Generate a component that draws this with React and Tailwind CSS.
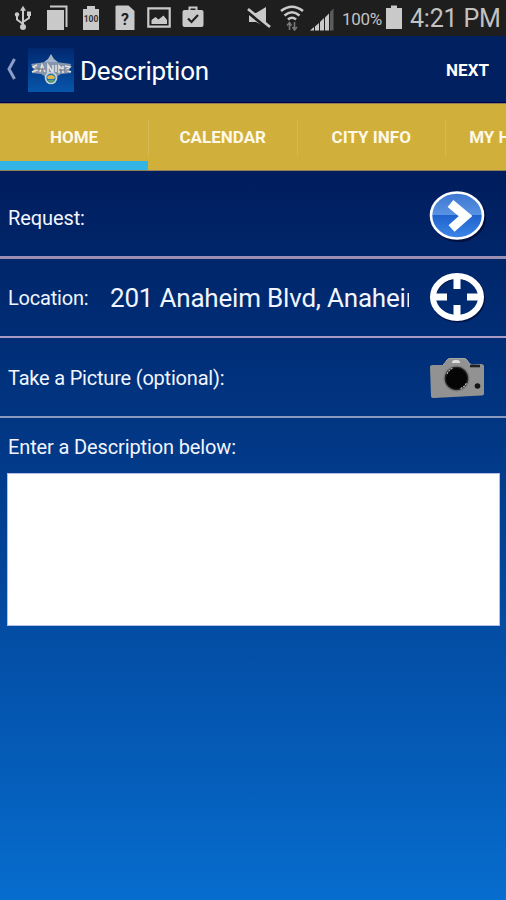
const UsbIcon = () => (
  <svg width="18" height="26" viewBox="0 0 18 26" className="ml-[14px]" fill="#c9c9c9" stroke="#c9c9c9">
    <path d="M9 5v17M3 10v4.500l6 4.500M15 9v4l-6 4" fill="none" strokeWidth="2" />
    <path d="M9 .8l3 5H6z" stroke="none" />
    <circle cx="9" cy="22" r="3" stroke="none" />
    <circle cx="3" cy="9.500" r="2.200" stroke="none" />
    <path d="M13 6.500h4v4.500h-4z" stroke="none" />
  </svg>
);

const PagesIcon = () => (
  <svg width="22" height="26" viewBox="0 0 22 26" className="ml-[14px]" fill="#c9c9c9">
    <path d="M1 5h17v20H1z" />
    <path d="M4 1.500h16.500V22" fill="none" stroke="#c9c9c9" strokeWidth="2" />
  </svg>
);

const BatteryLevelIcon = () => (
  <svg width="18" height="26" viewBox="0 0 18 26" className="ml-[14px]" fill="#c9c9c9">
    <path d="M5 1h8v3h4v21H1V4h4z" />
    <text x="9" y="17" textAnchor="middle" fontSize="8.500" fontWeight="700" fill="#333" fontFamily="Roboto, sans-serif">100</text>
  </svg>
);

const UnknownSimIcon = () => (
  <svg width="20" height="26" viewBox="0 0 20 26" className="ml-[15px]" fill="#c9c9c9">
    <path d="M1.500 0.500h12L19.500 6v19h-19V1.500z" />
    <text x="10" y="19.500" textAnchor="middle" fontSize="16" fontWeight="700" fill="#222" fontFamily="Roboto, sans-serif">?</text>
  </svg>
);

const ImageIcon = () => (
  <svg width="24" height="26" viewBox="0 0 24 26" className="ml-[12px]">
    <path d="M1.300 3.300h21.400v18.400H1.300z" fill="none" stroke="#c9c9c9" strokeWidth="2.200" />
    <path d="M4.500 19v-4l4-3 3 2.500 5-4 3.500 4.500v4z" fill="#c9c9c9" />
  </svg>
);

const TaskIcon = () => (
  <svg width="22" height="26" viewBox="0 0 22 26" className="ml-[11px]">
    <rect x="0.500" y="5" width="21" height="17" rx="2" fill="#c9c9c9" />
    <path d="M7.500 6V2.500h7V6" fill="none" stroke="#c9c9c9" strokeWidth="2" />
    <path d="M6 13.500l3.500 3.500 6.500-7" fill="none" stroke="#222" strokeWidth="2.200" />
  </svg>
);

const MuteIcon = () => (
  <svg width="24" height="26" viewBox="0 0 24 26">
    <path d="M2 8h7L19 2v20L9 17H2z" fill="#c9c9c9" />
    <path d="M0 5.500L22 23.500" stroke="#1e1e1e" strokeWidth="4.500" />
    <path d="M1 4L23 22" stroke="#c9c9c9" strokeWidth="2.800" />
  </svg>
);

const WifiIcon = () => (
  <svg width="24" height="26" viewBox="0 0 24 26" className="ml-[9px]" fill="none">
    <path d="M1 6Q12-2.500 23 6M4.500 10.500Q12 4 19.500 10.500M8 14.500Q12 11 16 14.500" stroke="#c9c9c9" strokeWidth="2.600" />
    <path d="M9.500 25v-7M14.500 17v7M7 20.500l2.500-3 2 3M12.500 22l2 3 2.500-3" stroke="#777" strokeWidth="1.600" />
  </svg>
);

const SignalIcon = () => (
  <svg width="24" height="26" viewBox="0 0 24 26" className="ml-[6px]" fill="#c9c9c9">
    <path d="M0 25.500l4-3.500v3.500zM5 21.500L9 18v7.500H5zM10 17L14 13v12.500h-4zM15 12.500L19 8.500v17h-4z" />
    <path d="M20 7l3.500-3.500v22H20z" fill="#5c5c5c" />
  </svg>
);

const BatteryIcon = () => (
  <svg width="16" height="26" viewBox="0 0 16 26" className="ml-[4px]" fill="#c9c9c9">
    <path d="M5 .5h6V3h5v21H0V3h5z" />
  </svg>
);

const StatusBar = () => (
  <div className="flex h-9 shrink-0 items-center bg-[#1e1e1e] text-[#c2c2c2]">
    <UsbIcon />
    <PagesIcon />
    <BatteryLevelIcon />
    <UnknownSimIcon />
    <ImageIcon />
    <TaskIcon />
    <div className="ml-auto flex items-center pr-[5px]">
      <MuteIcon />
      <WifiIcon />
      <SignalIcon />
      <span className="ml-[8px] mt-[2px] w-[40px] whitespace-nowrap text-[17px] leading-none tracking-[-0.3px]">100%</span>
      <BatteryIcon />
      <span className="ml-2 w-[91px] whitespace-nowrap text-[25px] leading-none tracking-[-0.2px]">4:21 PM</span>
    </div>
  </div>
);

const AppLogo = () => (
  <svg width="46" height="44" viewBox="0 0 46 44" className="ml-[11px] mt-[2px]">
    <defs>
      <linearGradient id="logoBg" x1="0" y1="0" x2="0" y2="1">
        <stop offset="0" stopColor="#01286f" />
        <stop offset="1" stopColor="#0756ac" />
      </linearGradient>
    </defs>
    <path d="M0 0h46v44H0z" fill="url(#logoBg)" />
    <path d="M23 6l3 5 4 3-1 3H17l-1-3 4-3z" fill="#a5b3c8" />
    <path d="M3 16l15-2h10l15 2-2 6 2 3-10 1-5 3H18l-5-3-9-1 2-4z" fill="#8495ae" />
    <path d="M9 17l-4 2 4 3-5 2M12 24l2-7 3 7M20 25v-8l5 8v-8M28 17v7M31 25v-7l4 4M35 25v-7M37 18l5 1-4 3 5 2" fill="none" stroke="#e5e1dc" strokeWidth="1.600" />
    <path d="M5 21h12M31 22h11" stroke="#6d6a74" strokeWidth="1" />
    <circle cx="23" cy="30" r="6.300" fill="#c4d0d9" />
    <circle cx="23" cy="30" r="4.600" fill="#2378a8" />
    <path d="M19 29q4-4 8 0l-1 2h-6z" fill="#e7b44a" />
    <path d="M19.500 32h7l-2 2.500h-3z" fill="#5a9c68" />
  </svg>
);

const Header = () => (
  <header className="flex h-[67px] shrink-0 items-center border-b border-[#00004d] bg-[#00205f] text-white">
    <svg width="11" height="22" viewBox="0 0 11 22" className="ml-[6px]">
      <path d="M8.500 1L3 11l5.500 10" fill="none" stroke="#8c9cc6" strokeWidth="3" />
    </svg>
    <AppLogo />
    <h1 className="ml-[6px] mt-[3px] text-[26px] leading-none tracking-[-0.25px]">Description</h1>
    <button className="ml-auto mr-[17px] mt-[2px] text-[17px] font-bold leading-none">NEXT</button>
  </header>
);

const tabs = ["HOME", "CALENDAR", "CITY INFO", "MY HOME"];

const Tabs = () => (
  <nav className="flex h-[68px] shrink-0 overflow-hidden border-y border-[#8f8058] bg-[#d0af3a]">
    {tabs.map((tab, i) => (
      <div
        key={tab}
        className={`flex shrink-0 flex-col ${i === 3 ? "w-[125px]" : i === 0 ? "w-[148px]" : "w-[148.500px]"}`}
      >
        <div className="flex flex-1 items-center">
          {i > 0 && <span className="mt-px h-9 w-px bg-[#d6b954]" />}
          <span className={`flex-1 whitespace-nowrap text-center text-[17px] font-bold leading-none text-[#fdf8e7] ${i === 0 ? "mt-[9px]" : "mt-px"}`}>
            {tab}
          </span>
        </div>
        {i === 0 && <div className="h-[9px] bg-[#32b4e5]" />}
      </div>
    ))}
  </nav>
);

const ArrowIcon = () => (
  <svg width="62" height="56" viewBox="0 0 62 56">
    <defs>
      <linearGradient id="arrowTop" x1="0" y1="0" x2="0" y2="1">
        <stop offset="0" stopColor="#3b76d0" />
        <stop offset="0.500" stopColor="#5a93e4" />
        <stop offset="0.500" stopColor="#2063cd" />
        <stop offset="1" stopColor="#3d87e8" />
      </linearGradient>
    </defs>
    <ellipse cx="32.500" cy="29.500" rx="27.500" ry="24.500" fill="#00103f" />
    <ellipse cx="31" cy="27.500" rx="26" ry="23" fill="url(#arrowTop)" stroke="#fff" strokeWidth="2.600" />
    <path d="M24.500 15.500L39.500 28 25.500 40.500" fill="none" stroke="#fff" strokeWidth="9" />
  </svg>
);

const TargetIcon = () => (
  <svg width="62" height="56" viewBox="0 0 62 56" fill="none">
    <ellipse cx="32" cy="28.300" rx="24.500" ry="21.500" stroke="#001344" strokeWidth="5.500" />
    <ellipse cx="31" cy="27" rx="24" ry="21" stroke="#fff" strokeWidth="6" />
    <path d="M31 6v13M31 35v13M7 27h14M41 27h14" stroke="#fff" strokeWidth="7" />
  </svg>
);

const CameraIcon = () => (
  <svg width="62" height="56" viewBox="0 0 62 56">
    <path d="M4 18q0-2 3-2h10q2-2 4-5 1-2 4-2h12q3 0 4 2 2 4 5 4.500l9-.5q3 0 3 2.500v27q0 2-3 2L8 49q-3 0-3-2z" fill="#929292" />
    <path d="M17 16q2-2 4-5 1-1.500 4-1.500h12q3 0 4 1.500 2 4 4 4.500" fill="none" stroke="#a8a8a8" strokeWidth="1" />
    <path d="M26 12.500l2-1.500h4l2 1.500v1.500h-8z" fill="#dedede" />
    <path d="M44 15.800h10v2.500H44z" fill="#202020" />
    <circle cx="30.500" cy="29.500" r="13" fill="#7e7e7e" />
    <circle cx="30.500" cy="29.500" r="11.800" fill="#222" />
    <circle cx="30.500" cy="29.500" r="10.500" fill="#050505" />
    <path d="M21 25q2-4.500 6-6M34.500 39.500q4-1.500 6-5.500" fill="none" stroke="#bbb" strokeWidth="1.200" strokeDasharray="2 1" />
    <circle cx="51.500" cy="37" r="2.800" fill="#151515" />
  </svg>
);

export default function App() {
  return (
    <div className="flex h-[900px] w-[506px] flex-col overflow-hidden bg-[#00205f] font-['Roboto',sans-serif]">
      <StatusBar />
      <Header />
      <Tabs />
      <main className="flex flex-1 flex-col bg-linear-to-b from-[#001d5d] via-[#034397] via-52% to-[#076dce] text-[20px] text-[#f2f5ff]">
        <div className="flex h-[88px] shrink-0 items-center justify-between border-b-3 border-[#9a8eb2] pl-2 pr-[18px]">
          <span className="mt-[8px] text-[20px] leading-none tracking-[-0.1px]">Request:</span>
          <div className="mt-[5px]"><ArrowIcon /></div>
        </div>
        <div className="flex h-[79px] shrink-0 items-center border-b-2 border-[#a99bc3] pl-2 pr-[18px]">
          <span className="w-[102px] text-[20px] leading-none tracking-[-0.2px]">Location:</span>
          <span className="w-[298.500px] overflow-hidden whitespace-nowrap text-[26px] leading-8 tracking-[-0.2px]">201 Anaheim Blvd, Anaheim, CA</span>
          <div className="ml-auto"><TargetIcon /></div>
        </div>
        <div className="flex h-[80px] shrink-0 items-center justify-between border-b-2 border-[#8999bd] pl-2 pr-[18px]">
          <span className="mt-[2px] text-[20px] leading-none tracking-[-0.2px]">Take a Picture (optional):</span>
          <CameraIcon />
        </div>
        <label htmlFor="description" className="ml-2 mt-[19px] text-[20px] leading-none tracking-[-0.13px]">
          Enter a Description below:
        </label>
        <textarea
          id="description"
          className="ml-[7px] mt-[16px] h-[153px] w-[493px] resize-none border border-[#b5bfe5] bg-white p-2 text-black outline-none"
        />
      </main>
    </div>
  );
}
